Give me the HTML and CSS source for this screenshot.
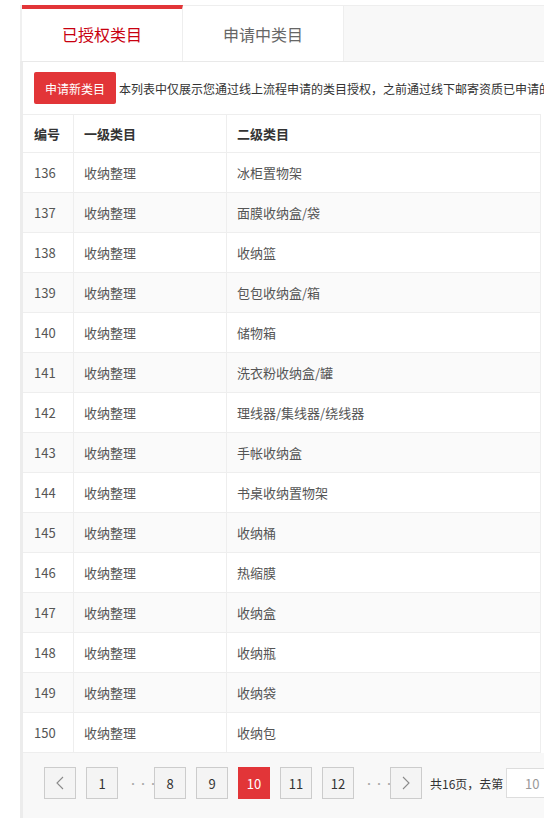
FILE: index.html
```html
<!DOCTYPE html>
<html lang="zh-CN">
<head>
<meta charset="utf-8">
<title>已授权类目</title>
<link rel="stylesheet" href="styles.css">
</head>
<body>
<div class="wrap">
  <div class="tabs">
    <div class="tab active">已授权类目</div>
    <div class="tab">申请中类目</div>
    <div class="tab-fill"></div>
  </div>
  <div class="panel">
    <div class="toolbar">
      <button class="btn-apply">申请新类目</button>
      <span class="tip">本列表中仅展示您通过线上流程申请的类目授权，之前通过线下邮寄资质已申请的类目授权不在此展示</span>
    </div>
    <div class="table">
      <div class="row head"><div class="c c1">编号</div><div class="c c2">一级类目</div><div class="c c3">二级类目</div></div>
      <div class="row"><div class="c c1">136</div><div class="c c2">收纳整理</div><div class="c c3">冰柜置物架</div></div>
      <div class="row alt"><div class="c c1">137</div><div class="c c2">收纳整理</div><div class="c c3">面膜收纳盒/袋</div></div>
      <div class="row"><div class="c c1">138</div><div class="c c2">收纳整理</div><div class="c c3">收纳篮</div></div>
      <div class="row alt"><div class="c c1">139</div><div class="c c2">收纳整理</div><div class="c c3">包包收纳盒/箱</div></div>
      <div class="row"><div class="c c1">140</div><div class="c c2">收纳整理</div><div class="c c3">储物箱</div></div>
      <div class="row alt"><div class="c c1">141</div><div class="c c2">收纳整理</div><div class="c c3">洗衣粉收纳盒/罐</div></div>
      <div class="row"><div class="c c1">142</div><div class="c c2">收纳整理</div><div class="c c3">理线器/集线器/绕线器</div></div>
      <div class="row alt"><div class="c c1">143</div><div class="c c2">收纳整理</div><div class="c c3">手帐收纳盒</div></div>
      <div class="row"><div class="c c1">144</div><div class="c c2">收纳整理</div><div class="c c3">书桌收纳置物架</div></div>
      <div class="row alt"><div class="c c1">145</div><div class="c c2">收纳整理</div><div class="c c3">收纳桶</div></div>
      <div class="row"><div class="c c1">146</div><div class="c c2">收纳整理</div><div class="c c3">热缩膜</div></div>
      <div class="row alt"><div class="c c1">147</div><div class="c c2">收纳整理</div><div class="c c3">收纳盒</div></div>
      <div class="row"><div class="c c1">148</div><div class="c c2">收纳整理</div><div class="c c3">收纳瓶</div></div>
      <div class="row alt"><div class="c c1">149</div><div class="c c2">收纳整理</div><div class="c c3">收纳袋</div></div>
      <div class="row"><div class="c c1">150</div><div class="c c2">收纳整理</div><div class="c c3">收纳包</div></div>
    </div>
    <div class="pager">
      <span class="pg arrow"><svg width="8" height="14" viewBox="0 0 8 14"><path d="M7 1 L1 7 L7 13" fill="none" stroke="#8a8a8a" stroke-width="1.1"/></svg></span>
      <span class="pg">1</span>
      <span class="dots">···</span>
      <span class="pg">8</span>
      <span class="pg">9</span>
      <span class="pg cur">10</span>
      <span class="pg">11</span>
      <span class="pg">12</span>
      <span class="dots">···</span>
      <span class="pg arrow"><svg width="8" height="14" viewBox="0 0 8 14"><path d="M1 1 L7 7 L1 13" fill="none" stroke="#8a8a8a" stroke-width="1.1"/></svg></span>
      <span class="total">共16页，去第</span>
      <span class="goto">10</span>
    </div>
  </div>
</div>
</body>
</html>
```

FILE: styles.css
```css
html, body {
  margin: 0;
  padding: 0;
  overflow: hidden;
  background: #fff;
}
body {
  font-family: "Noto Sans CJK SC", "Microsoft YaHei", sans-serif;
  color: #333;
}
.wrap {
  margin: 5px 0 0 20px;
  width: 560px;
}
.tabs {
  display: flex;
  height: 56px;
  border-left: 2px solid #f0f0f0;
}
.tab {
  width: 161px;
  flex: none;
  box-sizing: border-box;
  display: flex;
  align-items: center;
  justify-content: center;
  font-size: 16px;
  color: #666;
  background: #fff;
  border-top: 1px solid #eee;
  border-right: 1px solid #eee;
}
.tab.active {
  border-top: 4px solid #e23538;
  color: #c8000f;
  padding-bottom: 3px;
}
.tab-fill {
  flex: 1;
  background: #f8f8f8;
  border-top: 1px solid #eee;
}
.panel {
  border-top: 1px solid #e9e9e9;
  border-left: 3px solid #ececec;
  background: #fff;
}
.toolbar {
  display: flex;
  align-items: center;
  padding: 10px 0 10px 11px;
  white-space: nowrap;
}
.btn-apply {
  flex: none;
  width: 82px;
  height: 32px;
  border: none;
  border-radius: 2px;
  background: #e23538;
  color: #fff;
  font-family: inherit;
  font-size: 12px;
  padding: 0;
  margin-right: 3px;
}
.tip {
  flex: none;
  font-size: 12px;
  color: #333;
}
.table {
  width: 518px;
  border-top: 1px solid #eee;
}
.row {
  display: grid;
  grid-template-columns: 51px 153px 314px;
  height: 40px;
  box-sizing: border-box;
  border-bottom: 1px solid #eee;
  font-size: 13px;
  color: #555;
}
.row.head {
  color: #333;
  font-weight: bold;
  height: 38px;
}
.row.alt {
  background: #fafafa;
}
.c {
  display: flex;
  align-items: center;
  padding-left: 10px;
  border-right: 1px solid #eee;
  white-space: nowrap;
}
.c1 {
  padding-left: 11px;
}
.pager {
  display: flex;
  align-items: center;
  background: #f8f8f8;
  padding: 14px 0 19px 21px;
  white-space: nowrap;
}
.pg {
  width: 32px;
  height: 32px;
  box-sizing: border-box;
  border: 1px solid #ccc;
  background: #f4f4f4;
  display: flex;
  align-items: center;
  justify-content: center;
  font-size: 13px;
  color: #333;
  margin-right: 10px;
  flex: none;
}
.pg.cur {
  background: #e23538;
  border-color: #e23538;
  color: #fff;
}
.dots {
  flex: none;
  width: 16px;
  margin-right: 10px;
  text-align: center;
  color: #aaa;
  font-size: 10px;
  letter-spacing: 0;
}
.total {
  flex: none;
  font-size: 12px;
  color: #333;
  margin-left: -2px;
  margin-right: 3px;
}
.goto {
  width: 52px;
  height: 30px;
  box-sizing: border-box;
  border: 1px solid #ddd;
  background: #fff;
  display: flex;
  align-items: center;
  justify-content: center;
  font-size: 13px;
  color: #999;
  flex: none;
}
```
